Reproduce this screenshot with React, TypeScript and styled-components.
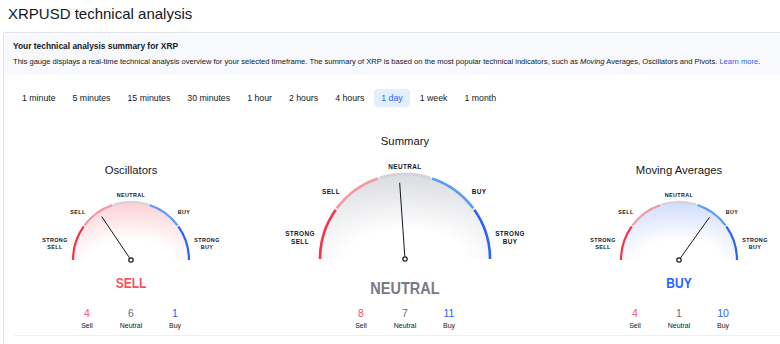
import React from 'react'
import styled, { createGlobalStyle } from 'styled-components'

const GlobalStyle = createGlobalStyle`
  html, body {
    margin: 0;
    padding: 0;
    background: #fff;
    overflow: hidden;
  }
  body {
    font-family: "Liberation Sans", Arial, sans-serif;
    color: #131722;
  }
`

const RED = '#f23645'
const LIGHT_RED = '#f599a1'
const GREY = '#d1d4dc'
const LIGHT_BLUE = '#5b9cf6'
const BLUE = '#2962ff'

const Title = styled.h1`
  margin: 0;
  padding-left: 8px;
  font-size: 15px;
  font-weight: 400;
  line-height: 28px;
  color: #131722;
`

const Panel = styled.section`
  margin: 4px 0 0 3px;
  width: 810px;
  border: 1px solid #e0e3eb;
  border-right: none;
  border-bottom: none;
  border-radius: 3px 0 0 0;
  height: 320px;
`

const Header = styled.div`
  background: #f8f9fd;
  padding: 7px 9px 7px;
`

const HeaderTitle = styled.div`
  font-size: 8.4px;
  font-weight: 700;
  line-height: 12px;
`

const HeaderText = styled.p`
  margin: 4px 0 0;
  font-size: 7.58px;
  line-height: 12px;
  white-space: nowrap;
  em {
    font-style: italic;
  }
`

const LearnMore = styled.a`
  color: #2962ff;
  text-decoration: none;
`

const Tabs = styled.div`
  display: flex;
  gap: 3px;
  margin: 14px 0 0 11px;
`

const Tab = styled.button<{ $active?: boolean }>`
  border: none;
  margin: 0;
  padding: 0 7px;
  height: 18px;
  line-height: 18px;
  border-radius: 4px;
  font-family: inherit;
  font-size: 8.75px;
  cursor: pointer;
  color: ${({ $active }) => ($active ? '#2962ff' : '#131722')};
  background: ${({ $active }) => ($active ? '#e3effd' : 'transparent')};
`

const GaugeGrid = styled.div`
  display: grid;
  grid-template-columns: 254px 294px 254px;
  align-items: end;
  margin-top: 27px;
  margin-bottom: 4px;
`

const GaugeCol = styled.div`
  display: flex;
  flex-direction: column;
  align-items: center;
`

const GaugeTitle = styled.div<{ $gap: number }>`
  font-size: 11.3px;
  line-height: 14px;
  margin-bottom: ${({ $gap }) => $gap}px;
`

const GaugeSvg = styled.svg`
  display: block;
  overflow: visible;
  text {
    font-family: "Liberation Sans", Arial, sans-serif;
    font-weight: 700;
    fill: #131722;
  }
`

const Verdict = styled.div<{ $color: string; $lg?: boolean }>`
  font-weight: 700;
  color: ${({ $color }) => $color};
  font-size: ${({ $lg }) => ($lg ? '14.5px' : '12px')};
  line-height: ${({ $lg }) => ($lg ? '20px' : '18px')};
  margin-top: ${({ $lg }) => ($lg ? '14px' : '9px')};
  transform: scaleY(1.15);
`

const Counts = styled.div<{ $lg?: boolean }>`
  display: flex;
  margin-top: ${({ $lg }) => ($lg ? '9px' : '15px')};
`

const Count = styled.div`
  width: 44px;
  display: flex;
  flex-direction: column;
  align-items: center;
  gap: 2px;
`

const CountValue = styled.span<{ $color: string }>`
  font-size: 10.5px;
  line-height: 12px;
  color: ${({ $color }) => $color};
`

const CountLabel = styled.span`
  font-size: 7px;
  line-height: 10px;
  color: #131722;
`

const Divider = styled.div`
  margin-left: 10px;
  border-top: 1px solid #eef0f5;
`

type GaugeProps = {
  id: string
  title: string
  lg?: boolean
  angle: number
  tint: string
  verdict: string
  verdictColor: string
  counts: [number, number, number]
}

const pt = (cx: number, cy: number, r: number, deg: number) => {
  const a = (deg * Math.PI) / 180
  return [cx + r * Math.cos(a), cy - r * Math.sin(a)]
}

const arc = (cx: number, cy: number, r: number, from: number, to: number) => {
  const [x1, y1] = pt(cx, cy, r, from)
  const [x2, y2] = pt(cx, cy, r, to)
  return `M ${x1} ${y1} A ${r} ${r} 0 0 1 ${x2} ${y2}`
}

function Gauge({ id, title, lg, angle, tint, verdict, verdictColor, counts }: GaugeProps) {
  const w = lg ? 294 : 254
  const h = lg ? 107 : 80
  const cx = w / 2
  const cy = lg ? 102 : 75
  const r = lg ? 85 : 58
  const sw = lg ? 2.6 : 2.2
  const fs = lg ? 6.4 : 5.4
  const needle = lg ? 76 : 52
  // label offsets from the centre
  const L = lg
    ? { n: -93, sx: 74, sy: -68, ssx: 105, ssy: -26 }
    : { n: -65, sx: 53, sy: -48, ssx: 76, ssy: -20 }
  const segs: [number, number, string][] = [
    [180, 144.6, RED],
    [143.4, 108.6, LIGHT_RED],
    [107.4, 72.6, GREY],
    [71.4, 36.6, LIGHT_BLUE],
    [35.4, 0, BLUE],
  ]
  const [nx0, ny0] = pt(cx, cy, 3, angle)
  const [nx1, ny1] = pt(cx, cy, needle, angle)
  const lh = fs + 1.8

  return (
    <GaugeCol>
      <GaugeTitle $gap={lg ? 9 : 8}>{title}</GaugeTitle>
      <GaugeSvg width={w} height={h} viewBox={`0 0 ${w} ${h}`}>
        <defs>
          <radialGradient id={id} cx="50%" cy="100%" r="100%" fx="50%" fy="100%">
            <stop offset="0" stopColor="#ffffff" />
            <stop offset="0.35" stopColor="#ffffff" />
            <stop offset="1" stopColor={tint} />
          </radialGradient>
        </defs>
        <path d={`M ${cx - r} ${cy} A ${r} ${r} 0 0 1 ${cx + r} ${cy} Z`} fill={`url(#${id})`} />
        {segs.map(([a, b, c]) => (
          <path key={a} d={arc(cx, cy, r, a, b)} stroke={c} strokeWidth={sw} fill="none" />
        ))}
        <g fontSize={fs} textAnchor="middle" dominantBaseline="central" letterSpacing={0.4}>
          <text x={cx} y={cy + L.n}>NEUTRAL</text>
          <text x={cx - L.sx} y={cy + L.sy}>SELL</text>
          <text x={cx + L.sx} y={cy + L.sy}>BUY</text>
          <text x={cx - L.ssx} y={cy + L.ssy}>STRONG</text>
          <text x={cx - L.ssx} y={cy + L.ssy + lh}>SELL</text>
          <text x={cx + L.ssx} y={cy + L.ssy}>STRONG</text>
          <text x={cx + L.ssx} y={cy + L.ssy + lh}>BUY</text>
        </g>
        <line x1={nx0} y1={ny0} x2={nx1} y2={ny1} stroke="#131722" strokeWidth={1} strokeLinecap="round" />
        <circle cx={cx} cy={cy} r={2.2} fill="#fff" stroke="#131722" strokeWidth={1.2} />
      </GaugeSvg>
      <Verdict $color={verdictColor} $lg={lg}>{verdict}</Verdict>
      <Counts $lg={lg}>
        <Count>
          <CountValue $color="#f7525f">{counts[0]}</CountValue>
          <CountLabel>Sell</CountLabel>
        </Count>
        <Count>
          <CountValue $color="#6a6d78">{counts[1]}</CountValue>
          <CountLabel>Neutral</CountLabel>
        </Count>
        <Count>
          <CountValue $color="#2962ff">{counts[2]}</CountValue>
          <CountLabel>Buy</CountLabel>
        </Count>
      </Counts>
    </GaugeCol>
  )
}

const TIMEFRAMES = ['1 minute', '5 minutes', '15 minutes', '30 minutes', '1 hour', '2 hours', '4 hours', '1 day', '1 week', '1 month']

export default function App() {
  return (
    <>
      <GlobalStyle />
      <Title>XRPUSD technical analysis</Title>
      <Panel>
        <Header>
          <HeaderTitle>Your technical analysis summary for XRP</HeaderTitle>
          <HeaderText>
            This gauge displays a real-time technical analysis overview for your selected timeframe. The summary of XRP is
            based on the most popular technical indicators, such as <em>Moving</em> Averages, Oscillators and Pivots.{' '}
            <LearnMore href="#">Learn more</LearnMore>.
          </HeaderText>
        </Header>
        <Tabs>
          {TIMEFRAMES.map((t) => (
            <Tab key={t} $active={t === '1 day'}>{t}</Tab>
          ))}
        </Tabs>
        <GaugeGrid>
          <Gauge
            id="osc"
            title="Oscillators"
            angle={124}
            tint="#fbd0d5"
            verdict="SELL"
            verdictColor="#f7525f"
            counts={[4, 6, 1]}
          />
          <Gauge
            id="sum"
            title="Summary"
            lg
            angle={94}
            tint="#dadbe0"
            verdict="NEUTRAL"
            verdictColor="#787b86"
            counts={[8, 7, 11]}
          />
          <Gauge
            id="ma"
            title="Moving Averages"
            angle={54.5}
            tint="#d0dcfc"
            verdict="BUY"
            verdictColor="#2962ff"
            counts={[4, 1, 10]}
          />
        </GaugeGrid>
        <Divider />
      </Panel>
    </>
  )
}
